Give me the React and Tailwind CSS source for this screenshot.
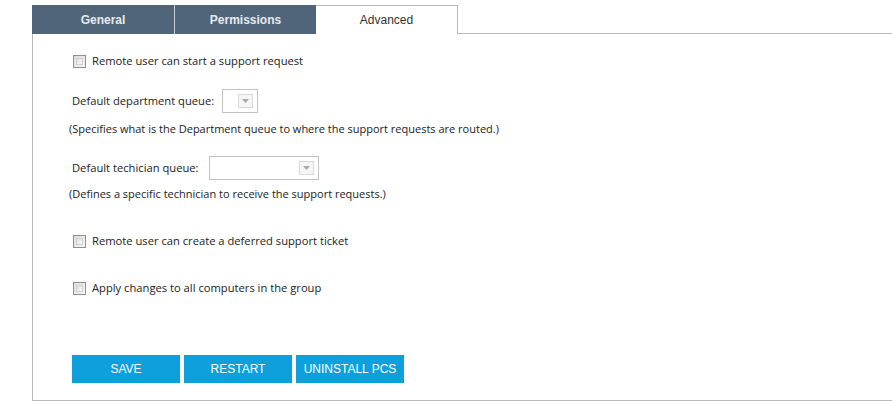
const tabBase = "flex h-full items-center justify-center text-[12px] font-['Liberation_Sans',Arial,sans-serif]";

function Checkbox() {
  return (
    <span className="block h-[13px] w-[13px] shrink-0 border border-[#8e8f8f] bg-gradient-to-br from-[#dcdcdc] to-[#f7f7f7] p-[2px]">
      <span className="block h-full w-full border border-[#d0d0d0] bg-gradient-to-br from-[#e0e0e0] to-[#fafafa]" />
    </span>
  );
}

function CheckRow({ label, className }) {
  return (
    <label className={"ml-[40px] flex h-[14px] items-center gap-[6px] " + className}>
      <Checkbox />
      <span className="text-[11.2px] text-[#222]">{label}</span>
    </label>
  );
}

function Select({ width }) {
  return (
    <div
      className={"flex h-[24px] items-center justify-end border border-[#c3c3c3] bg-white pr-[4px] " + width}
    >
      <span className="flex h-[14px] w-[15px] items-center justify-center border border-[#d9d9d9] bg-[#f6f6f6]">
        <svg width="7" height="4" viewBox="0 0 7 4">
          <path d="M0 0h7L3.5 4z" fill="#a8a8a8" />
        </svg>
      </span>
    </div>
  );
}

function Button({ children }) {
  return (
    <button className="flex h-[28px] w-[108px] items-center justify-center bg-[#0ea0dc] font-['Liberation_Sans',Arial,sans-serif] text-[12px] text-white">
      {children}
    </button>
  );
}

export default function App() {
  return (
    <div className="h-[402px] w-[892px] bg-white pl-[32px] pt-[5px] font-['Open_Sans','Noto_Sans',sans-serif]">
      <div className="flex h-[29px]">
        <div className={tabBase + " w-[142px] bg-[#50657a] font-bold text-[#e6eaee]"}>General</div>
        <div className="h-full w-px bg-[#c9d1d8]" />
        <div className={tabBase + " w-[141px] bg-[#50657a] font-bold text-[#e6eaee]"}>Permissions</div>
        <div className={tabBase + " w-[142px] border-t border-r border-[#b9b9b9] bg-white text-[#333]"}>Advanced</div>
        <div className="flex-1 border-b border-[#b9b9b9]" />
      </div>

      <div className="flex flex-col border-l border-b border-[#b9b9b9] pb-[17px]">
        <CheckRow label="Remote user can start a support request" className="mt-[20px]" />

        <div className="ml-[39px] mt-[21px] flex h-[24px] items-center gap-[8px]">
          <span className="text-[11.2px] text-[#222]">Default department queue:</span>
          <Select width="w-[36px]" />
        </div>
        <p className="ml-[36px] mt-[8px] text-[11px] leading-[16px] text-[#222]">
          (Specifies what is the Department queue to where the support requests are routed.)
        </p>

        <div className="ml-[39px] mt-[19px] flex h-[24px] items-center gap-[10px]">
          <span className="text-[11.2px] text-[#222]">Default techician queue:</span>
          <Select width="w-[110px]" />
        </div>
        <p className="ml-[36px] mt-[6px] text-[11px] leading-[16px] text-[#222]">
          (Defines a specific technician to receive the support requests.)
        </p>

        <CheckRow label="Remote user can create a deferred support ticket" className="mt-[32px]" />
        <CheckRow label="Apply changes to all computers in the group" className="mt-[33px]" />

        <div className="ml-[39px] mt-[60px] flex gap-[4px]">
          <Button>SAVE</Button>
          <Button>RESTART</Button>
          <Button>UNINSTALL PCS</Button>
        </div>
      </div>
    </div>
  );
}
